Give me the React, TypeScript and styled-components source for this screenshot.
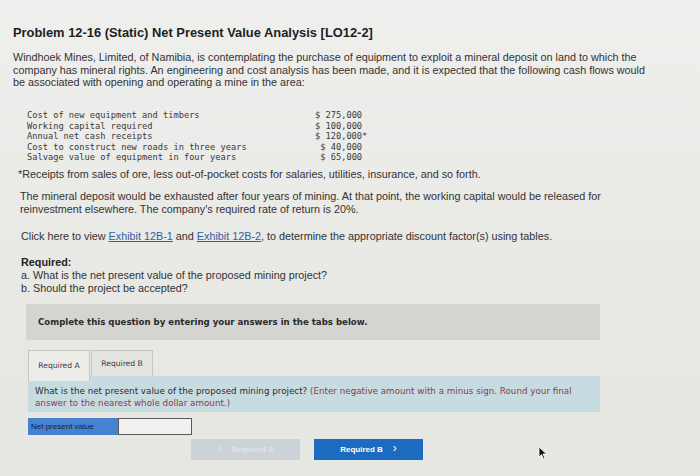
import React from "react";
import styled, { createGlobalStyle } from "styled-components";

const GlobalStyle = createGlobalStyle`
  html, body {
    margin: 0;
    padding: 0;
    background: #e9e9e6;
  }
  body {
    font-family: "Liberation Sans", Arial, sans-serif;
    color: #2e2e2e;
  }
`;

const Page = styled.div`
  position: relative;
  width: 700px;
  height: 476px;
  overflow: hidden;
  box-sizing: border-box;
  padding: 24px 0 0 13px;
  background: linear-gradient(180deg, #efefed 0%, #e8e8e5 60%, #e6e6e3 100%);
`;

const Title = styled.h1`
  margin: 0;
  font-size: 12.9px;
  line-height: 18px;
  font-weight: bold;
  color: #1e1e1e;
`;

const Para = styled.p<{ $top?: number; $indent?: number }>`
  margin: ${(p) => p.$top ?? 0}px 0 0 ${(p) => p.$indent ?? 0}px;
  white-space: nowrap;
  font-size: 10.8px;
  line-height: 12.7px;
  color: #333;
`;

const CashTable = styled.div`
  display: grid;
  grid-template-columns: 288px max-content;
  margin: 21px 0 0 14px;
  font-family: "DejaVu Sans Mono", "Liberation Mono", monospace;
  font-size: 8.7px;
  line-height: 10.5px;
  color: #3a3a3a;
  white-space: pre;
`;

const Amount = styled.span`
  text-align: right;
`;

const Star = styled.span`
  margin-right: -1ch;
`;

const Link = styled.a`
  color: #2f62a3;
  text-decoration: underline;
`;

const Strong = styled.span`
  font-weight: bold;
  color: #222;
`;

const Panel = styled.div`
  width: 574px;
  margin: 9px 0 0 13px;
  font-family: "DejaVu Sans", Verdana, sans-serif;
`;

const Banner = styled.div`
  height: 36px;
  background: #d4d4d1;
  display: flex;
  align-items: center;
  padding-left: 12px;
  font-size: 8.6px;
  font-weight: bold;
  color: #2a2a2a;
`;

const Tabs = styled.div`
  display: flex;
  margin: 10px 0 0 2px;
  gap: 1px;
`;

const Tab = styled.div<{ $active?: boolean }>`
  width: 62px;
  height: ${(p) => (p.$active ? 31 : 26)}px;
  box-sizing: border-box;
  border: 1px solid #c4c4c0;
  border-bottom: none;
  background: ${(p) => (p.$active ? "#ecece9" : "#e3e3e0")};
  display: flex;
  align-items: center;
  justify-content: center;
  font-size: 7.6px;
  color: #3a3a3a;
  margin-bottom: ${(p) => (p.$active ? -5 : 0)}px;
  position: relative;
`;

const Question = styled.div`
  margin-left: 2px;
  height: 36px;
  box-sizing: border-box;
  background: #c7dce1;
  padding: 9px 7px 0 7px;
  font-size: 8.75px;
  line-height: 12px;
  color: #2c2c2c;
  white-space: nowrap;
`;

const Hint = styled.span`
  color: #8a3b4c;
`;

const AnswerRow = styled.div`
  display: flex;
  margin: 6px 0 0 2px;
  height: 17px;
`;

const AnswerLabel = styled.div`
  width: 90px;
  background: #4582cf;
  color: #13223d;
  font-family: "Liberation Sans", Arial, sans-serif;
  font-size: 8px;
  display: flex;
  align-items: center;
  padding-left: 3px;
  box-sizing: border-box;
`;

const AnswerInput = styled.div`
  width: 72px;
  height: 15px;
  border: 1px solid #5a5a5a;
  background: #f1f1ef;
`;

const Nav = styled.div`
  display: flex;
  gap: 14px;
  margin: 4px 0 0 165px;
`;

const NavButton = styled.div<{ $disabled?: boolean }>`
  width: 109px;
  height: 21px;
  background: ${(p) => (p.$disabled ? "#cbd2d8" : "#1b6bc1")};
  color: ${(p) => (p.$disabled ? "#dfe5ea" : "#ffffff")};
  display: flex;
  align-items: center;
  justify-content: center;
  gap: 10px;
  font-family: "Liberation Sans", Arial, sans-serif;
  font-weight: bold;
  font-size: 8px;
`;

const Chevron = styled.span`
  font-size: 12px;
  font-weight: normal;
  line-height: 1;
  margin-top: -2px;
`;

const Cursor = styled.svg`
  position: absolute;
  left: 538px;
  top: 446px;
`;

const rows: [string, string, boolean][] = [
  ["Cost of new equipment and timbers", "$ 275,000", false],
  ["Working capital required", "$ 100,000", false],
  ["Annual net cash receipts", "$ 120,000", true],
  ["Cost to construct new roads in three years", "$ 40,000", false],
  ["Salvage value of equipment in four years", "$ 65,000", false],
];

export default function App() {
  return (
    <Page>
      <GlobalStyle />
      <Title>Problem 12-16 (Static) Net Present Value Analysis [LO12-2]</Title>
      <Para $top={9}>
        Windhoek Mines, Limited, of Namibia, is contemplating the purchase of equipment to exploit a mineral deposit on land to which the
        <br />
        company has mineral rights. An engineering and cost analysis has been made, and it is expected that the following cash flows would
        <br />
        be associated with opening and operating a mine in the area:
      </Para>
      <CashTable>
        {rows.map(([label, amount, star]) => (
          <React.Fragment key={label}>
            <span>{label}</span>
            <Amount>
              {amount}
              {star && <Star>*</Star>}
            </Amount>
          </React.Fragment>
        ))}
      </CashTable>
      <Para $top={5} $indent={5}>
        *Receipts from sales of ore, less out-of-pocket costs for salaries, utilities, insurance, and so forth.
      </Para>
      <Para $top={10} $indent={7}>
        The mineral deposit would be exhausted after four years of mining. At that point, the working capital would be released for
        <br />
        reinvestment elsewhere. The company's required rate of return is 20%.
      </Para>
      <Para $top={14} $indent={8}>
        Click here to view <Link>Exhibit 12B-1</Link> and <Link>Exhibit 12B-2</Link>, to determine the appropriate discount factor(s) using tables.
      </Para>
      <Para $top={14} $indent={8}>
        <Strong>Required:</Strong>
        <br />
        a. What is the net present value of the proposed mining project?
        <br />
        b. Should the project be accepted?
      </Para>
      <Panel>
        <Banner>Complete this question by entering your answers in the tabs below.</Banner>
        <Tabs>
          <Tab $active>Required A</Tab>
          <Tab>Required B</Tab>
        </Tabs>
        <Question>
          What is the net present value of the proposed mining project?{" "}
          <Hint>
            (Enter negative amount with a minus sign. Round your final
            <br />
            answer to the nearest whole dollar amount.)
          </Hint>
        </Question>
        <AnswerRow>
          <AnswerLabel>Net present value</AnswerLabel>
          <AnswerInput />
        </AnswerRow>
        <Nav>
          <NavButton $disabled>
            <Chevron>‹</Chevron>
            <span>Required A</span>
          </NavButton>
          <NavButton>
            <span>Required B</span>
            <Chevron>›</Chevron>
          </NavButton>
        </Nav>
      </Panel>
      <Cursor width="10" height="14" viewBox="0 0 10 14">
        <path d="M1 1 L1 11 L3.5 8.6 L5.5 13 L7 12.3 L5 8 L8.5 8 Z" fill="#111" stroke="#fff" strokeWidth="0.8" />
      </Cursor>
    </Page>
  );
}
